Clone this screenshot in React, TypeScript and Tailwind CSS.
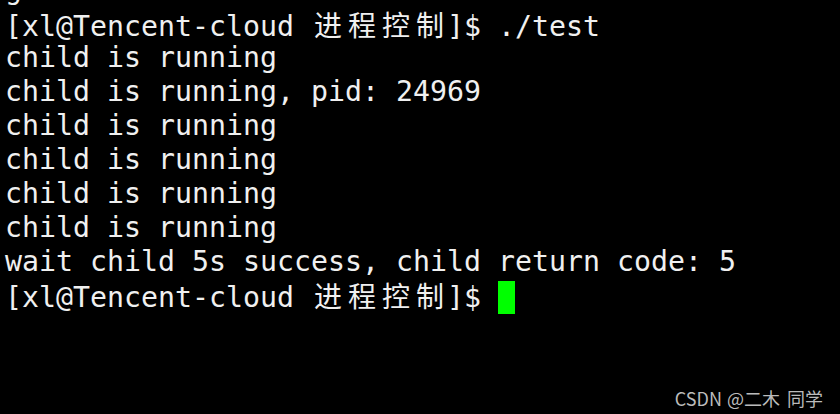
const mono = "font-['DejaVu_Sans_Mono','Liberation_Mono',monospace]";

function Wide({ text }: { text: string }) {
  return (
    <>
      {text.split("").map((ch, i) => (
        <span
          key={i}
          className="inline-block w-[34px] text-center font-['Noto_Sans_CJK_SC',sans-serif] text-[28px]"
        >
          {ch}
        </span>
      ))}
    </>
  );
}

function Prompt() {
  return (
    <>
      [xl@Tencent-cloud <Wide text="进程控制" />]$
    </>
  );
}

const lines = [
  "child is running",
  "child is running, pid: 24969",
  "child is running",
  "child is running",
  "child is running",
  "child is running",
  "wait child 5s success, child return code: 5",
];

export default function App() {
  return (
    <div className="relative w-[840px] h-[414px] bg-black overflow-hidden">
      <div
        className={`${mono} text-[28.24px] leading-[34px] text-[#f0f0f0] whitespace-pre pl-[5px] -mt-[27px]`}
      >
        <div className="h-[34px]">gcc -o test test.c</div>
        <div className="h-[34px]">
          <Prompt /> ./test
        </div>
        {lines.map((l, i) => (
          <div key={i} className="h-[34px]">
            {l}
          </div>
        ))}
        <div className="h-[34px] flex items-center">
          <span>
            <Prompt />{" "}
          </span>
          <span className="inline-block w-[17px] h-[33px] bg-[#00ff00] mt-[2px]" />
        </div>
      </div>
      <div className="absolute right-[17px] bottom-[5px] font-['Noto_Sans_CJK_SC',sans-serif] text-[18px] leading-[22px] text-[#bbbbbb] whitespace-pre">
        CSDN<span className="inline-block w-[5px]"> </span>@二木<span className="inline-block w-[7px]"> </span>同学
      </div>
    </div>
  );
}
